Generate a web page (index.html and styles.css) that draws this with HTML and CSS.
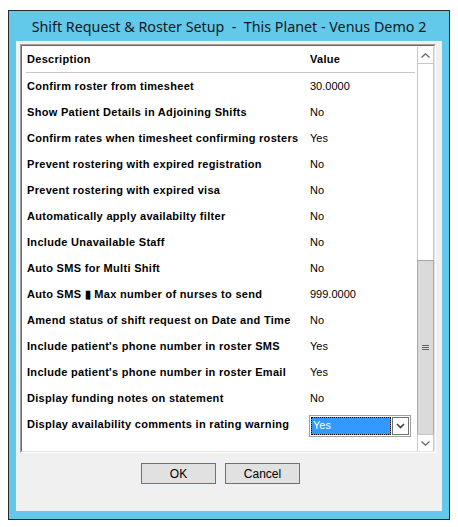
FILE: index.html
```html
<!DOCTYPE html>
<html>
<head>
<meta charset="utf-8">
<link rel="stylesheet" href="styles.css">
</head>
<body>
<div class="window">
  <div class="titlebar">Shift Request &amp; Roster Setup  -  This Planet - Venus Demo 2</div>
  <div class="client">
    <div class="listbox">
      <div class="listinner">
        <div class="grid">
          <div class="row header"><span class="desc">Description</span><span class="val">Value</span></div>
          <div class="sep"></div>
          <div class="row"><span class="desc">Confirm roster from timesheet</span><span class="val">30.0000</span></div>
          <div class="row"><span class="desc">Show Patient Details in Adjoining Shifts</span><span class="val">No</span></div>
          <div class="row"><span class="desc">Confirm rates when timesheet confirming rosters</span><span class="val">Yes</span></div>
          <div class="row"><span class="desc">Prevent rostering with expired registration</span><span class="val">No</span></div>
          <div class="row"><span class="desc">Prevent rostering with expired visa</span><span class="val">No</span></div>
          <div class="row"><span class="desc">Automatically apply availabilty filter</span><span class="val">No</span></div>
          <div class="row"><span class="desc">Include Unavailable Staff</span><span class="val">No</span></div>
          <div class="row"><span class="desc">Auto SMS for Multi Shift</span><span class="val">No</span></div>
          <div class="row"><span class="desc">Auto SMS ▮ Max number of nurses to send</span><span class="val">999.0000</span></div>
          <div class="row"><span class="desc">Amend status of shift request on Date and Time</span><span class="val">No</span></div>
          <div class="row"><span class="desc">Include patient's phone number in roster SMS</span><span class="val">Yes</span></div>
          <div class="row"><span class="desc">Include patient's phone number in roster Email</span><span class="val">Yes</span></div>
          <div class="row"><span class="desc">Display funding notes on statement</span><span class="val">No</span></div>
          <div class="row"><span class="desc">Display availability comments in rating warning</span>
            <span class="combo"><span class="combo-text">Yes</span><span class="combo-btn"><svg width="9" height="6" viewBox="0 0 9 6"><path d="M1 1 L4.5 4.5 L8 1" fill="none" stroke="#404040" stroke-width="1.6"/></svg></span></span>
          </div>
        </div>
        <div class="scrollbar">
          <div class="sb-btn up"><svg width="9" height="5" viewBox="0 0 9 5"><path d="M0.5 4.5 L4.5 0.8 L8.5 4.5" fill="none" stroke="#606060" stroke-width="1.2"/></svg></div>
          <div class="sb-track"></div>
          <div class="sb-thumb"><span class="grip"></span><span class="grip"></span><span class="grip"></span></div>
          <div class="sb-btn down"><svg width="9" height="5" viewBox="0 0 9 5"><path d="M0.5 0.5 L4.5 4.2 L8.5 0.5" fill="none" stroke="#606060" stroke-width="1.2"/></svg></div>
        </div>
      </div>
    </div>
    <div class="buttons">
      <button class="btn default">OK</button>
      <button class="btn">Cancel</button>
    </div>
  </div>
</div>
</body>
</html>
```
FILE: styles.css
```css
* { box-sizing: border-box; }
html, body { margin: 0; padding: 0; background: #ffffff; }
body { width: 458px; height: 527px; overflow: hidden; }

.window {
  margin: 10px 0 0 8px;
  width: 442px;
  height: 510px;
  border: 1px solid #2a2a2a;
  background: #63c9ea;
  padding: 0 7px 8px 7px;
  display: flex;
  flex-direction: column;
}

.titlebar {
  height: 30px;
  line-height: 30px;
  padding-top: 1px;
  text-align: center;
  white-space: pre;
  font-family: "Noto Sans", "DejaVu Sans", sans-serif;
  font-size: 14.3px;
  color: #101820;
}

.client {
  flex: 1;
  background: #f0f0f0;
  padding: 3px 6px 0 4px;
  display: flex;
  flex-direction: column;
}

.listbox {
  height: 409px;
  border: 1px solid;
  border-color: #a0a0a0 #ffffff #ffffff #a0a0a0;
}

.listinner {
  height: 100%;
  border: 1px solid;
  border-color: #696969 #e3e3e3 #e3e3e3 #696969;
  background: #ffffff;
  display: flex;
}

.grid {
  flex: 1;
  padding: 0 0 0 5px;
  font-family: "Liberation Sans", Arial, sans-serif;
  font-size: 11px;
  color: #000;
}

.row {
  height: 26px;
  display: flex;
  align-items: center;
}

.desc {
  width: 283px;
  flex: none;
  font-weight: bold;
  letter-spacing: 0.3px;
}

.val { font-weight: normal; }
.header .val { font-weight: bold; letter-spacing: 0.3px; }

.sep {
  height: 1px;
  background: #c8c8c8;
  margin: 0 2px 0 -1px;
}

.combo {
  margin-left: -1px;
  margin-top: 3px;
  width: 102px;
  height: 22px;
  border: 1px solid #a0a0a0;
  background: #fff;
  display: flex;
  padding: 1px;
}
.combo-text {
  flex: 1;
  background: #3399ff;
  color: #fff;
  outline: 1px dotted #000;
  outline-offset: -1px;
  padding-left: 2px;
  line-height: 17px;
  font-weight: normal;
}
.combo-btn {
  width: 17px;
  margin-left: 1px;
  border: 1px solid #707070;
  background: #fff;
  display: flex;
  align-items: center;
  justify-content: center;
}

.scrollbar {
  width: 17px;
  display: flex;
  flex-direction: column;
  border-left: 1px solid #c8c8c8;
  border-right: 1px solid #c8c8c8;
  background: #ffffff;
  margin-top: 1px;
}
.sb-btn {
  height: 17px;
  display: flex;
  align-items: center;
  justify-content: center;
  background: #fff;
}
.sb-btn.up { border-bottom: 1px solid #c8c8c8; }
.sb-btn.down { border-top: 1px solid #c8c8c8; }
.sb-track { height: 196px; }
.sb-thumb {
  flex: 1;
  background: #dadada;
  border-top: 1px solid #a8a8a8;
  margin: 0 -1px;
  border-left: 1px solid #a8a8a8;
  border-right: 1px solid #a8a8a8;
  display: flex;
  flex-direction: column;
  align-items: center;
  justify-content: center;
  gap: 1px;
}
.grip {
  width: 7px;
  height: 1px;
  background: #606060;
}

.buttons {
  display: flex;
  gap: 9px;
  padding: 10px 0 0 121px;
}
.btn {
  width: 75px;
  height: 21px;
  background: #e1e1e1;
  border: 1px solid #707070;
  font-family: "Liberation Sans", Arial, sans-serif;
  font-size: 12px;
  color: #000;
  padding: 0;
}
.btn.default { border-color: #3c7fb1; }
```
